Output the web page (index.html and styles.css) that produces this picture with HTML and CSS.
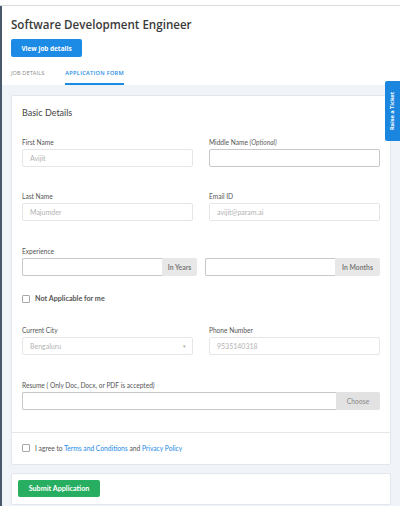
FILE: index.html
```html
<!DOCTYPE html>
<html>
<head>
<meta charset="utf-8">
<link rel="stylesheet" href="styles.css">
</head>
<body>
<div class="topbar"></div>
<div class="shell">
  <div class="strip"></div>
  <div class="main">
    <header class="header">
      <h1 class="title">Software Development Engineer</h1>
      <button class="btn-blue">View job details</button>
      <nav class="tabs">
        <span class="tab">JOB DETAILS</span>
        <span class="tab active">APPLICATION FORM</span>
      </nav>
    </header>
    <section class="content">
      <div class="card">
        <div class="card-body">
          <h2 class="section-title">Basic Details</h2>
          <div class="grid">
            <div class="field">
              <label class="label">First Name</label>
              <div class="input disabled">Avijit</div>
            </div>
            <div class="field">
              <label class="label">Middle Name <i>(Optional)</i></label>
              <div class="input active"></div>
            </div>
            <div class="field">
              <label class="label">Last Name</label>
              <div class="input disabled">Majumder</div>
            </div>
            <div class="field">
              <label class="label">Email ID</label>
              <div class="input disabled">avijit@param.ai</div>
            </div>
          </div>
          <div class="field exp">
            <label class="label">Experience</label>
            <div class="exp-row">
              <div class="group">
                <div class="group-input"></div>
                <div class="addon years">In Years</div>
              </div>
              <div class="group">
                <div class="group-input"></div>
                <div class="addon months">In Months</div>
              </div>
            </div>
          </div>
          <div class="check-row na">
            <span class="checkbox"></span>
            <span class="check-text">Not Applicable for me</span>
          </div>
          <div class="grid city">
            <div class="field">
              <label class="label">Current City</label>
              <div class="input disabled select">Bengaluru<span class="caret">&#9662;</span></div>
            </div>
            <div class="field">
              <label class="label">Phone Number</label>
              <div class="input disabled">9535140318</div>
            </div>
          </div>
          <div class="field resume">
            <label class="label">Resume ( Only Doc, Docx, or PDF is accepted)</label>
            <div class="group single">
              <div class="group-input"></div>
              <div class="addon choose">Choose</div>
            </div>
          </div>
        </div>
        <div class="agree">
          <span class="checkbox"></span>
          <span class="agree-text">I agree to <a class="link">Terms and Conditions</a> and <a class="link">Privacy Policy</a></span>
        </div>
      </div>
      <div class="card submit-card">
        <button class="btn-green">Submit Application</button>
      </div>
    </section>
  </div>
</div>
<div class="ticket"><span>Raise a Ticket</span></div>
</body>
</html>
```
FILE: styles.css
```css
* { box-sizing: border-box; }
html, body { margin: 0; padding: 0; }
body {
  width: 400px;
  height: 506px;
  overflow: hidden;
  background: #fff;
  font-family: "Open Sans", "Liberation Sans", sans-serif;
  color: #333;
}
.topbar {
  height: 6px;
  border-bottom: 1px solid #dcdcdc;
  background: #fff;
}
.shell {
  display: flex;
  height: 500px;
}
.strip {
  width: 2px;
  background: #4a586b;
  flex: none;
}
.main {
  flex: 1;
  display: flex;
  flex-direction: column;
  background: #f0f3f8;
}
.header {
  background: #fff;
  padding: 10px 0 0 9px;
}
.title {
  margin: 0;
  font-size: 11.6px;
  line-height: 17px;
  font-weight: 600;
  color: #3a3a3a;
  letter-spacing: 0;
}
.btn-blue {
  display: block;
  margin-top: 6px;
  width: 71px;
  height: 18px;
  border: none;
  border-radius: 2px;
  background: #1b8be6;
  color: #fff;
  font-family: "Open Sans", sans-serif;
  font-weight: 700;
  font-size: 6.4px;
  padding: 0;
}
.tabs {
  display: flex;
  margin-top: 5px;
  gap: 21px;
}
.tab {
  padding: 7px 0 6px;
  font-size: 5.6px;
  line-height: 8px;
  color: #8a8a8a;
  border-bottom: 2px solid transparent;
  letter-spacing: 0.1px;
}
.tab.active {
  color: #1b8be6;
  border-bottom-color: #1b8be6;
  font-weight: 600;
  letter-spacing: 0.3px;
}
.content {
  padding: 10px 9px 0 9px;
  display: flex;
  flex-direction: column;
  gap: 8px;
}
.card {
  background: #fff;
  border: 1px solid #e3e6ea;
  border-radius: 2px;
}
.card-body {
  padding: 12px 10px 22px;
  border-bottom: 1px solid #e6e6e6;
  font-family: "Lato", "Open Sans", sans-serif;
}
.section-title {
  margin: 0;
  font-size: 9px;
  line-height: 10px;
  font-weight: 400;
  color: #444;
}
.grid {
  display: grid;
  grid-template-columns: 171px 171px;
  column-gap: 16px;
  row-gap: 25px;
  margin-top: 20px;
}
.field { display: flex; flex-direction: column; }
.label {
  font-size: 6.6px;
  line-height: 9px;
  color: #555;
  margin-bottom: 2px;
}
.label i { color: #666; }
.input {
  height: 18px;
  border: 1px solid #e6e6e6;
  border-radius: 2px;
  background: #fff;
  font-size: 7px;
  color: #b3b3b3;
  padding: 0 7px;
  display: flex;
  align-items: center;
}
.input.active { border-color: #c8c8c8; }
.select { justify-content: space-between; }
.caret { font-size: 5px; color: #aaa; margin-right: -1px; }
.exp { margin-top: 26px; }
.exp-row {
  display: flex;
  gap: 8px;
}
.group {
  flex: 1;
  display: flex;
  height: 18px;
}
.group.single { flex: none; }
.group-input {
  flex: 1;
  border: 1px solid #c8c8c8;
  border-right: none;
  border-radius: 2px 0 0 2px;
}
.addon {
  background: #e8e8e8;
  border-radius: 0 2px 2px 0;
  font-size: 6.8px;
  font-weight: 700;
  color: #7a7a7a;
  display: flex;
  align-items: center;
  justify-content: center;
}
.addon.years { width: 35px; }
.addon.months { width: 45px; }
.addon.choose { width: 44px; font-weight: 400; color: #888; background: #e2e2e2; }
.check-row {
  display: flex;
  align-items: center;
  gap: 5px;
  height: 9px;
}
.na { margin-top: 18px; }
.checkbox {
  width: 8px;
  height: 8px;
  border: 1px solid #a8a8a8;
  border-radius: 1px;
  background: #fff;
  flex: none;
}
.check-text {
  font-size: 7.2px;
  color: #555;
  font-weight: 700;
}
.city { margin-top: 23px; }
.resume { margin-top: 26px; }
.agree {
  display: flex;
  align-items: center;
  gap: 5px;
  height: 31px;
  padding: 0 10px 2px;
  font-family: "Lato", "Open Sans", sans-serif;
}
.agree-text { font-size: 6.7px; color: #555; }
.link { color: #1b8be6; text-decoration: none; }
.submit-card {
  padding: 6px 6px 7px;
  border-radius: 2px 2px 0 0;
}
.btn-green {
  display: block;
  width: 82px;
  height: 17px;
  border: none;
  border-radius: 2px;
  background: #27ae60;
  color: #fff;
  font-family: "Lato", "Open Sans", sans-serif;
  font-weight: 700;
  font-size: 7.2px;
  padding: 0;
}
.ticket {
  position: absolute;
  left: 385px;
  top: 81px;
  width: 15px;
  height: 60px;
  background: #1b86e0;
  border-radius: 2px 0 0 2px;
  display: flex;
  align-items: center;
  justify-content: center;
}
.ticket span {
  transform: rotate(-90deg);
  white-space: nowrap;
  color: #fff;
  font-size: 5.6px;
  font-weight: 700;
  font-family: "Open Sans", sans-serif;
}
```
